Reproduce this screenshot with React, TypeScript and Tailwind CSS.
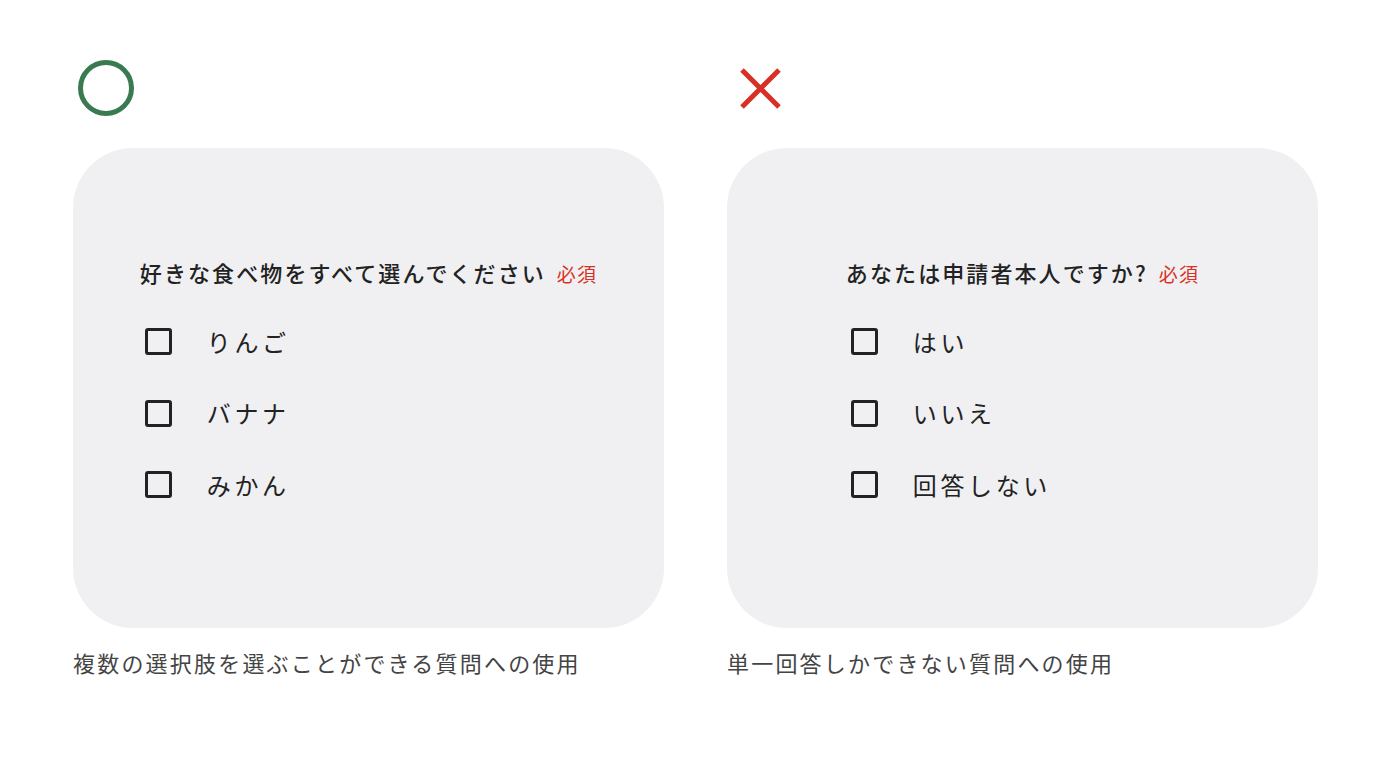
const font = { fontFamily: '"Noto Sans CJK JP", "Noto Sans", sans-serif' }

type Example = {
  good: boolean
  question: string
  options: string[]
  caption: string
}

const examples: Example[] = [
  {
    good: true,
    question: '好きな食べ物をすべて選んでください',
    options: ['りんご', 'バナナ', 'みかん'],
    caption: '複数の選択肢を選ぶことができる質問への使用',
  },
  {
    good: false,
    question: 'あなたは申請者本人ですか?',
    options: ['はい', 'いいえ', '回答しない'],
    caption: '単一回答しかできない質問への使用',
  },
]

function GoodMark() {
  return (
    <svg width="56" height="56" viewBox="0 0 56 56" fill="none">
      <circle cx="28" cy="28" r="25.5" stroke="#3a7a50" strokeWidth="5" />
    </svg>
  )
}

function BadMark() {
  return (
    <svg width="56" height="56" viewBox="0 0 56 56" fill="none">
      <path d="M10 10L47 47M47 10L10 47" stroke="#d93025" strokeWidth="5" />
    </svg>
  )
}

function Checkbox() {
  return <span className="block w-[27px] h-[27px] rounded-[3px] border-[3px] border-[#222222] shrink-0" />
}

function ExampleCard({ item }: { item: Example }) {
  return (
    <div className="flex flex-col">
      <div className="h-[56px] pl-[5px]">{item.good ? <GoodMark /> : <BadMark />}</div>

      <div className="mt-[32px] h-[480px] rounded-[60px] bg-[#f0f0f2] flex justify-center pt-[108px]">
        <div className="w-fit">
          <div className="flex items-baseline h-[32px] leading-[32px]">
            <span className="text-[22px] font-medium tracking-[0.095em] text-[#222222]">{item.question}</span>
            <span className="ml-[11px] text-[19px] tracking-[0.06em] text-[#d93025]">必須</span>
          </div>

          <div className="mt-[18px] flex flex-col">
            {item.options.map((opt) => (
              <div key={opt} className="h-[71.5px] flex items-center pl-[5px] gap-[35px]">
                <Checkbox />
                <span className="text-[24px] tracking-[0.15em] text-[#222222] leading-none">{opt}</span>
              </div>
            ))}
          </div>
        </div>
      </div>

      <p className="mt-[19px] text-[22px] tracking-[0.1em] leading-[30px] text-[#444444]">{item.caption}</p>
    </div>
  )
}

export default function App() {
  return (
    <div className="w-[1392px] h-[758px] bg-white px-[73px] pt-[60px]" style={font}>
      <div className="grid grid-cols-[591px_591px] gap-x-[63px]">
        {examples.map((item) => (
          <ExampleCard key={item.question} item={item} />
        ))}
      </div>
    </div>
  )
}
